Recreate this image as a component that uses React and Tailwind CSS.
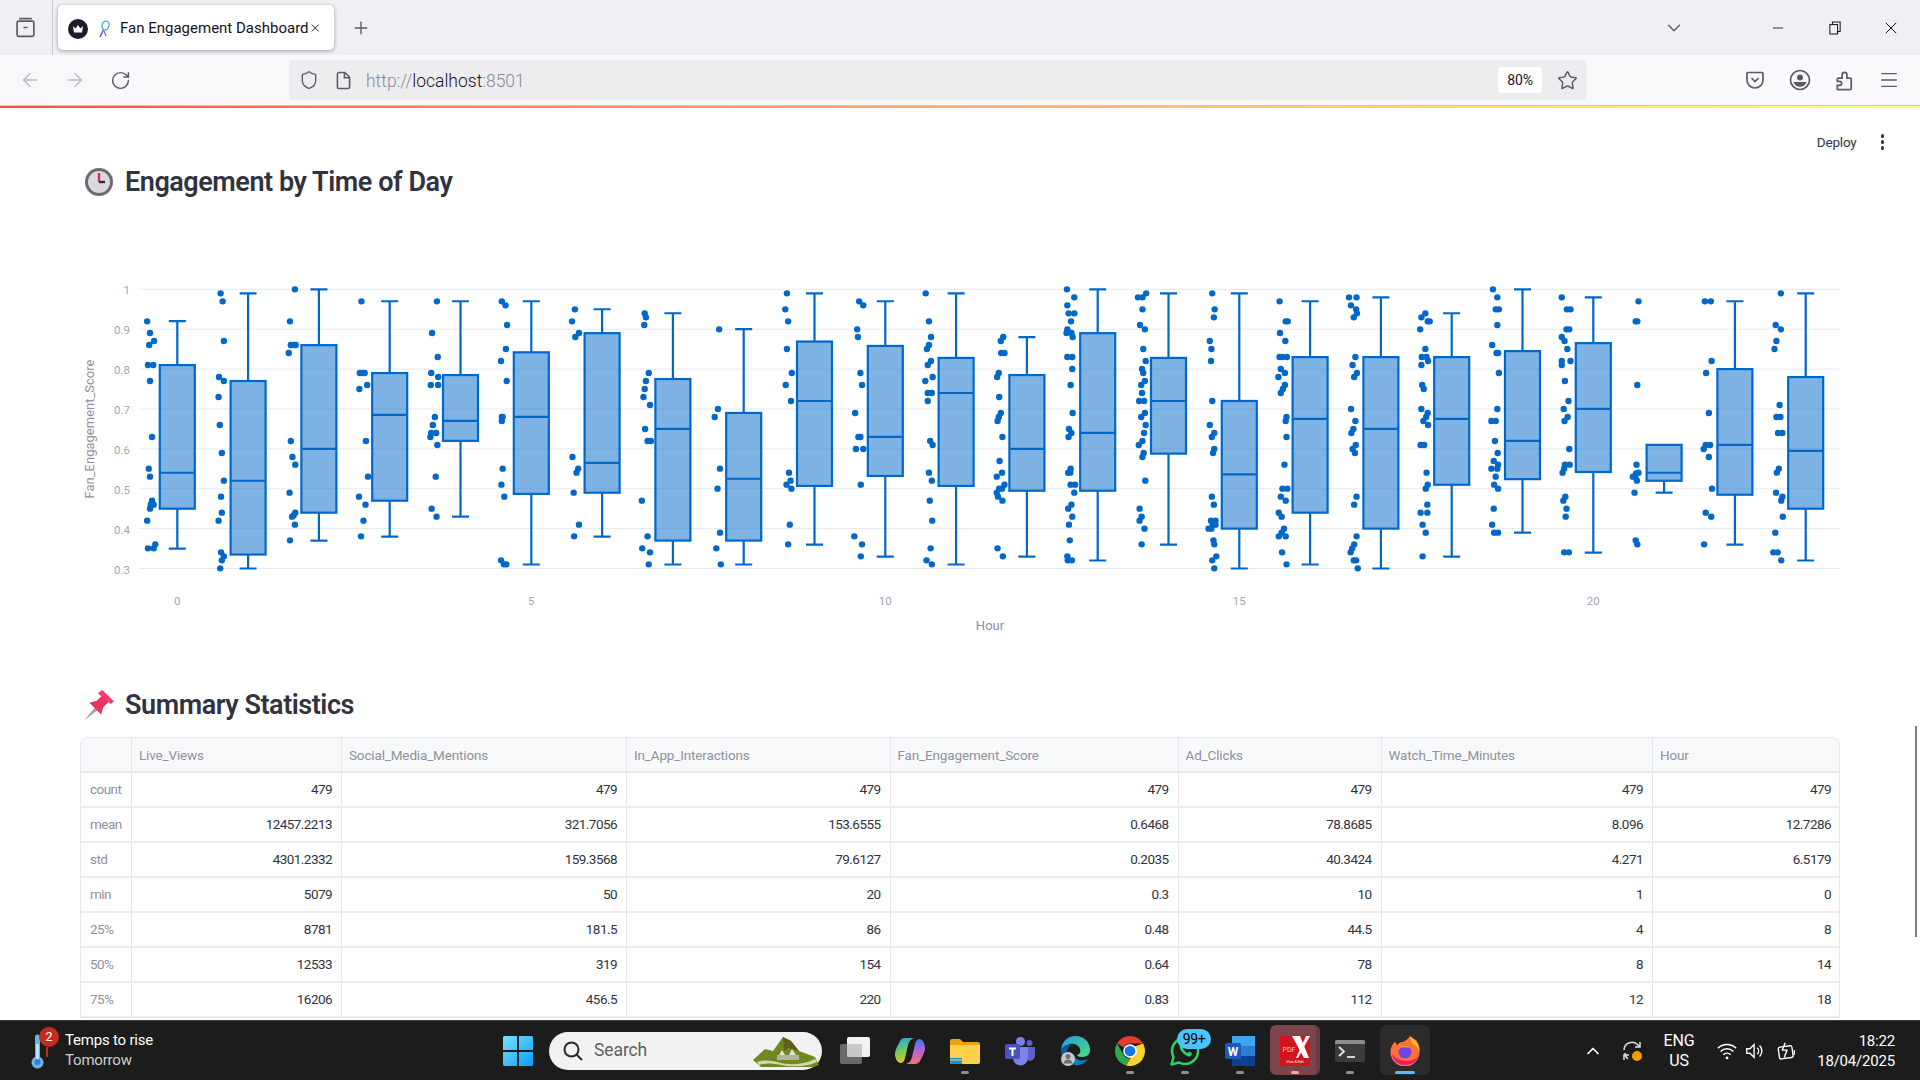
import { ArrowLeft, ArrowRight, ChevronDown, ChevronUp, Menu, Minus, Plus, RotateCw, Shield, Star, X } from "lucide-react";

const boxes = [
  [0.92, 0.81, 0.54, 0.45, 0.35], [0.99, 0.77, 0.52, 0.335, 0.3], [1, 0.86, 0.6, 0.44, 0.37], [0.97, 0.79, 0.685, 0.47, 0.38],
  [0.97, 0.785, 0.67, 0.62, 0.43], [0.97, 0.842, 0.68, 0.487, 0.31], [0.95, 0.89, 0.565, 0.49, 0.38], [0.94, 0.775, 0.65, 0.37, 0.31],
  [0.9, 0.69, 0.525, 0.37, 0.31], [0.99, 0.869, 0.72, 0.507, 0.36], [0.97, 0.858, 0.63, 0.532, 0.33], [0.99, 0.828, 0.74, 0.507, 0.31],
  [0.88, 0.785, 0.6, 0.495, 0.33], [1, 0.89, 0.64, 0.495, 0.32], [0.99, 0.828, 0.72, 0.588, 0.36], [0.99, 0.72, 0.536, 0.4, 0.3],
  [0.97, 0.83, 0.675, 0.44, 0.31], [0.98, 0.83, 0.65, 0.4, 0.3], [0.94, 0.83, 0.675, 0.51, 0.33], [1, 0.845, 0.62, 0.524, 0.39],
  [0.98, 0.865, 0.7, 0.542, 0.34], [0.61, 0.61, 0.54, 0.52, 0.49], [0.97, 0.8, 0.61, 0.485, 0.36], [0.99, 0.78, 0.595, 0.45, 0.32],
];

// scatter points, read off the crops: [x, y] in crop space, one list per crop
const pointGroups = [
  { x0: 70, sx: 2.45, pts: [[189,154],[196,189],[206,213],[194,225],[191,285],[204,285],[196,333],[201,501],[193,596],[196,620],[201,692],[200,700],[198,704],[205,704],[196,716],[189,752],[209,823],[205,835],[191,835],
    [369,70],[374,94],[377,213],[365,321],[377,333],[364,381],[367,465],[372,549],[377,632],[370,680],[372,728],[364,752],[370,847],[377,859],[372,871],[368,895],
    [551,58],[539,154],[541,225],[548,225],[553,225],[536,249],[541,513],[545,561],[552,584],[538,668],[552,728],[548,736],[544,740],[551,764],[539,811],
    [714,94],[710,309],[716,309],[722,309],[728,345],[709,357],[725,513],[730,620],[708,680],[724,704],[719,752],[713,799],
    [899,94],[887,189],[901,261],[885,309],[902,321],[884,345],[902,345],[894,441],[889,465],[885,489],[897,489],[883,501],[900,525],[896,620],[886,716],[898,740],
    [1058,94],[1067,106],[1071,165],[1068,237],[1056,273],[1070,333],[1058,441],[1060,441],[1058,453],[1060,596],[1057,644],[1064,680],[1056,871],[1063,883],[1069,883],
    [1237,118],[1230,154],[1247,189],[1238,201],[1231,561],[1245,596],[1241,608],[1234,668],[1247,764],[1235,799],
    [1408,130],[1411,142],[1407,165],[1418,309],[1411,333],[1408,357],[1405,381],[1421,405],[1409,477],[1415,513],[1423,513],[1401,692],[1415,799],[1402,835],[1421,847],[1418,883]] },
  { x0: 700, sx: 2.45, pts: [[47,178],[44,417],[36,441],[49,596],[43,656],[49,788],[40,835],[51,883],
    [213,70],[209,118],[216,154],[213,237],[225,309],[210,345],[223,393],[218,608],[222,632],[212,644],[224,656],[220,764],[216,823],
    [390,94],[400,106],[385,178],[387,201],[393,309],[397,345],[380,429],[388,501],[393,501],[382,537],[400,537],[394,644],[378,799],[397,823],[394,859],
    [553,70],[561,154],[566,201],[561,225],[556,237],[566,273],[558,285],[570,321],[552,333],[558,369],[568,369],[558,393],[564,513],[570,525],[561,608],[568,632],[563,692],[569,752],[565,835],[555,871],[568,883],
    [743,201],[737,213],[738,249],[746,249],[732,309],[728,321],[733,381],[737,429],[732,441],[729,453],[741,501],[734,573],[740,608],[727,620],[746,644],[740,656],[733,656],[727,668],[730,680],[741,692],[729,835],[742,859],
    [899,58],[917,82],[900,106],[903,130],[917,130],[909,154],[900,178],[910,189],[898,189],[913,201],[900,261],[912,261],[912,297],[908,345],[913,429],[904,477],[910,489],[903,501],[908,596],[902,608],[907,608],[908,644],[919,644],[917,668],[910,704],[902,716],[912,740],[904,764],[906,811],[900,859],[901,871],[911,871],
    [1093,70],[1073,82],[1084,82],[1084,118],[1078,165],[1090,178],[1086,237],[1092,273],[1083,297],[1086,309],[1090,333],[1081,345],[1083,369],[1076,393],[1088,393],[1090,429],[1081,441],[1092,465],[1088,489],[1084,513],[1075,525],[1087,549],[1084,561],[1091,632],[1077,716],[1082,740],[1077,752],[1089,776],[1082,823],
    [1255,70],[1261,118],[1259,142],[1249,213],[1253,237],[1252,273],[1255,393],[1249,465],[1260,489],[1254,501],[1260,537],[1257,549],[1254,680],[1259,704],[1252,752],[1263,752],[1256,764],[1263,764],[1246,776],[1253,776],[1258,811],[1260,823],[1265,859],[1255,871],[1260,895],
    [1420,94],[1435,154],[1440,154],[1421,189],[1434,213],[1420,261],[1427,261],[1438,261],[1423,297],[1433,309],[1417,321],[1433,345],[1428,357],[1423,369],[1437,441],[1435,453],[1437,501],[1432,584],[1427,656],[1439,656],[1423,680],[1435,692],[1418,728],[1425,740],[1431,776],[1425,788],[1418,799],[1435,799],[1426,847],[1437,883]] },
  { x0: 1300, sx: 2.529, pts: [[124,82],[143,82],[129,106],[142,118],[144,130],[136,142],[140,261],[133,285],[144,309],[137,321],[129,417],[140,453],[135,477],[130,489],[141,525],[133,537],[139,549],[143,680],[137,704],[143,799],[137,823],[132,835],[128,847],[136,871],[142,871],[146,895],
    [317,130],[307,142],[323,154],[328,154],[304,178],[317,237],[308,261],[320,261],[324,273],[307,285],[309,345],[313,357],[307,417],[323,429],[319,441],[312,453],[324,465],[305,525],[314,525],[320,608],[323,644],[318,656],[322,704],[305,728],[322,728],[310,764],[318,788],[310,859],
    [488,58],[499,82],[495,118],[503,118],[499,165],[486,225],[497,249],[501,249],[503,309],[499,417],[484,453],[495,453],[493,513],[500,549],[490,573],[501,584],[484,596],[499,596],[495,620],[491,644],[501,656],[490,716],[486,764],[491,788],[501,788],
    [662,82],[675,118],[684,118],[674,178],[681,178],[662,201],[669,213],[676,237],[662,273],[684,273],[662,285],[670,333],[679,393],[667,417],[677,441],[669,453],[681,537],[670,584],[682,584],[668,596],[664,608],[671,680],[666,692],[674,716],[672,740],[668,847],[680,847],
    [856,94],[849,154],[853,154],[853,345],[851,584],[856,608],[850,610],[842,620],[848,622],[852,632],[846,668],[849,811],[853,823],
    [1024,94],[1039,94],[1041,273],[1027,309],[1034,429],[1026,525],[1037,525],[1021,537],[1034,561],[1042,656],[1026,728],[1040,740],[1022,823],
    [1216,70],[1203,165],[1216,178],[1205,213],[1200,237],[1213,405],[1205,441],[1215,441],[1209,489],[1220,489],[1211,596],[1206,608],[1204,668],[1220,680],[1217,692],[1221,740],[1202,788],[1197,847],[1208,847],[1217,871]] },
];

const yOf = (v) => 568.5 - ((v - 0.3) / 0.7) * 279.2;
const xOf = (h) => 177.3 + 70.8 * h;

const columns = ["Live_Views", "Social_Media_Mentions", "In_App_Interactions", "Fan_Engagement_Score", "Ad_Clicks", "Watch_Time_Minutes", "Hour"];
const rows = [
  ["count", "479", "479", "479", "479", "479", "479", "479"],
  ["mean", "12457.2213", "321.7056", "153.6555", "0.6468", "78.8685", "8.096", "12.7286"],
  ["std", "4301.2332", "159.3568", "79.6127", "0.2035", "40.3424", "4.271", "6.5179"],
  ["min", "5079", "50", "20", "0.3", "10", "1", "0"],
  ["25%", "8781", "181.5", "86", "0.48", "44.5", "4", "8"],
  ["50%", "12533", "319", "154", "0.64", "78", "8", "14"],
  ["75%", "16206", "456.5", "220", "0.83", "112", "12", "18"],
];

function BoxChart() {
  return (
    <svg viewBox="80 270 1780 380" className="block w-[1780px] h-[380px] ml-[80px] mt-[68px] shrink-0" fontFamily="Roboto, sans-serif">
      {[0.3, 0.4, 0.5, 0.6, 0.7, 0.8, 0.9, 1].map((v) => (
        <g key={v}>
          <line x1="139" x2="1840" y1={yOf(v)} y2={yOf(v)} stroke="#e6eaf1" strokeWidth="1" />
          <text x="130" y={yOf(v) + 5} textAnchor="end" fontSize="11.5" fill="#a3a5ae">{v}</text>
        </g>
      ))}
      {[0, 5, 10, 15, 20].map((h) => (
        <text key={h} x={xOf(h)} y="605" textAnchor="middle" fontSize="11.5" fill="#a3a5ae">{h}</text>
      ))}
      <text x="990" y="630" textAnchor="middle" fontSize="13" fill="#8f919c">Hour</text>
      <text x="94" y="429" textAnchor="middle" fontSize="13" fill="#8f919c" transform="rotate(-90 94 429)">Fan_Engagement_Score</text>
      {boxes.map(([hi, q3, med, q1, lo], h) => {
        const x = xOf(h);
        return (
          <g key={h} stroke="#0068c9" strokeWidth="2.2" fill="none">
            {hi !== q3 && <path d={`M${x} ${yOf(hi)}V${yOf(q3)}M${x - 8.5} ${yOf(hi)}h17`} />}
            <path d={`M${x} ${yOf(q1)}V${yOf(lo)}M${x - 8.5} ${yOf(lo)}h17`} />
            <rect x={x - 17.5} y={yOf(q3)} width="35" height={yOf(q1) - yOf(q3)} fill="#0068c9" fillOpacity="0.5" />
            <line x1={x - 17.5} x2={x + 17.5} y1={yOf(med)} y2={yOf(med)} />
          </g>
        );
      })}
      {pointGroups.map((g) =>
        g.pts.map(([zx, zy], i) => <circle key={`${g.x0}-${i}`} cx={g.x0 + zx / g.sx} cy={270 + zy / 3} r="3.2" fill="#0068c9" />)
      )}
    </svg>
  );
}

function StatsTable() {
  const grid = "grid grid-cols-[51px_210px_285px_263.5px_288px_203px_271.5px_188px]";
  return (
    <div className="ml-[80px] mt-[12px] w-[1760px] border-x border-t border-[#e6e7ea] rounded-t-lg overflow-hidden text-[13.5px] font-[Roboto] shrink-0">
      <div className={`${grid} h-[35px] bg-[#f8f9fb] border-b-2 border-[#e9eaed] text-[#8f919c] tracking-[-0.15px]`}>
        <div className="border-r border-[#e6e7ea]" />
        {columns.map((c) => (
          <div key={c} className="flex items-center pl-[7px] pt-[2px] border-r border-[#e6e7ea] last:border-r-0">{c}</div>
        ))}
      </div>
      {rows.map((row) => (
        <div key={row[0]} className={`${grid} h-[35px] border-b-2 border-[#eceded] tracking-[-0.55px]`}>
          <div className="flex items-center pl-[9px] border-r border-[#e6e7ea] text-[#8f919c]">{row[0]}</div>
          {row.slice(1).map((v, i) => (
            <div key={i} className="flex items-center justify-end pr-[9px] last:pr-[10px] border-r border-[#e6e7ea] last:border-r-0 text-[#31333f]">{v}</div>
          ))}
        </div>
      ))}
    </div>
  );
}

function ClockEmoji() {
  return (
    <svg viewBox="0 0 30 30" className="w-[30px] h-[30px]">
      <circle cx="15" cy="15" r="14" fill="#6d6a70" />
      <circle cx="15" cy="15" r="11" fill="#dcd8de" />
      <path d="M15 6v9" stroke="#e0245e" strokeWidth="2.4" />
      <path d="M15 15h6" stroke="#2c2c4a" strokeWidth="2.4" />
    </svg>
  );
}

function PinEmoji() {
  return (
    <svg viewBox="0 0 30 30" className="w-[32px] h-[32px]">
      <path d="M1 29.500l10-12 2.500 2.500z" fill="#a5a2a8" />
      <path d="M6 13l11 11 2-7 5-5-6-6-5 5z" fill="#e8325f" />
      <path d="M18 1l11 10.500-3 2.500L14 4z" fill="#f23d6d" />
    </svg>
  );
}

function FirefoxIcon() {
  return (
    <svg viewBox="0 0 30 30" className="w-[30px] h-[30px]">
      <path d="M26 4c3 4 4 8 3.500 12a14.500 14.500 0 0 1-29 0C.5 11 3 8 5 5.500L7 9c2-2.500 4.500-3 6-3 3-1.500 5-3 7-6 0 3 4 2 6 4z" fill="#ff7139" />
      <path d="M20 0c4 3 9 7 9.500 15-2-4-4-6-7-7-1-3-2-5-2.500-8z" fill="#ffbd2e" />
      <path d="M2 18c1 6 6 11 13 11 7 0 12-4 14-10-3 4-7 6-13 6-6 0-11-3-14-7z" fill="#f5156c" />
      <circle cx="15" cy="16" r="6.500" fill="#7542e5" />
      <path d="M9 12c3-3 8-3 11 0-3-1-8-1-11 0z" fill="#ffa436" />
    </svg>
  );
}

function ChromeIcon() {
  return (
    <svg viewBox="0 0 48 48" className="w-[30px] h-[30px]">
      <path d="M24 0a24 24 0 0 1 20.800 12H24a12 12 0 0 0-10.400 6L3.200 12A24 24 0 0 1 24 0z" fill="#e33b2e" />
      <path d="M3.200 12l10.400 18a12 12 0 0 0 10.400 6L17.800 47.200A24 24 0 0 1 3.200 12z" fill="#2da94f" />
      <path d="M44.800 12a24 24 0 0 1-27 35.200L28.200 30a12 12 0 0 0 0-12z" fill="#fdd12d" />
      <circle cx="24" cy="24" r="11" fill="#fff" />
      <circle cx="24" cy="24" r="8.500" fill="#1a73e8" />
    </svg>
  );
}

function EdgeIcon() {
  return (
    <svg viewBox="0 0 30 30" className="w-[30px] h-[30px]">
      <defs>
        <linearGradient id="edgeA" x1="0" y1="0" x2="1" y2="1">
          <stop offset="0" stopColor="#1d9fe0" />
          <stop offset="1" stopColor="#4fdc7a" />
        </linearGradient>
      </defs>
      <path d="M1 14C2 5 8 0 15 0c9 0 15 6 15 14 0 5-4 7-8 7-3 0-5-1-5-2 3-1 4-3 3-6-1-4-6-6-10-5-4 1-8 3-9 6z" fill="url(#edgeA)" />
      <path d="M1 14c2-4 6-6 10-5-3 2-5 5-4 10 1 4 4 8 8 10C7 29 1 23 1 14z" fill="#0c59a4" />
      <path d="M15 29c5 1 10-2 13-6-3 1-6 2-9 1-3-1-5-3-5-6-2 3-1 9 1 11z" fill="#1379c9" />
      <circle cx="8" cy="23" r="7" fill="#c8c8c8" />
      <circle cx="8" cy="20.500" r="2.500" fill="#6e6e6e" />
      <path d="M3.500 27.500a4.500 4 0 0 1 9 0z" fill="#6e6e6e" />
    </svg>
  );
}

function TeamsIcon() {
  return (
    <svg viewBox="0 0 30 30" className="w-[30px] h-[30px]">
      <circle cx="24.500" cy="7" r="3" fill="#5b5fc7" />
      <circle cx="15.500" cy="5.500" r="4.500" fill="#7b83eb" />
      <path d="M20 11h10v9a5 5 0 0 1-7 4.500z" fill="#5b5fc7" />
      <path d="M8 11h15v11a7.500 7.500 0 0 1-15 0z" fill="#7b83eb" />
      <rect x="0" y="8" width="15" height="15" rx="2" fill="#4b53bc" />
      <path d="M4 11.500h7v2H8.500V20h-2v-6.500H4z" fill="#fff" />
    </svg>
  );
}

function WordIcon() {
  return (
    <svg viewBox="0 0 30 30" className="w-[30px] h-[30px]">
      <rect x="7" y="0" width="23" height="10" fill="#41a5ee" />
      <rect x="7" y="10" width="23" height="10" fill="#2b7cd3" />
      <rect x="7" y="20" width="23" height="10" fill="#103f91" />
      <rect x="0" y="7" width="16" height="16" rx="1.500" fill="#185abd" />
      <text x="8" y="19.500" textAnchor="middle" fontSize="12" fontWeight="700" fill="#fff" fontFamily="Roboto, sans-serif">W</text>
    </svg>
  );
}

function WhatsAppIcon() {
  return (
    <svg viewBox="0 0 30 30" className="w-[30px] h-[30px]" fill="none">
      <path d="M1.500 28.500l2-7.500A13 13 0 1 1 9 26.500z" stroke="#25d366" strokeWidth="2.500" strokeLinejoin="round" />
      <path d="M10 9c-1 2 0 5 3 8s6 4 8 3l1-3-3-1.500-1.500 1.500c-2-1-3.500-2.500-4.500-4.500L14 11l-1.500-3z" fill="#25d366" />
    </svg>
  );
}

function PdfIcon() {
  return (
    <svg viewBox="0 0 30 30" className="w-[30px] h-[30px]">
      <rect width="30" height="30" fill="#d2141c" />
      <path d="M12 0h8l9 22h-5z" fill="#fff" />
      <path d="M30 0L18 22h-2L26 0z" fill="#fff" />
      <text x="2.500" y="16" fontSize="7" fill="#f3c7c7" fontFamily="Roboto, sans-serif">PDF</text>
      <text x="15" y="27" fontSize="3.500" textAnchor="middle" fill="#fff" fontFamily="Roboto, sans-serif">View &amp; Edit</text>
    </svg>
  );
}

function TerminalIcon() {
  return (
    <svg viewBox="0 0 30 24" className="w-[30px] h-[24px]">
      <rect width="30" height="22" y="1" rx="1.500" fill="#3b3b3b" />
      <path d="M1.500 1H28.500A1.500 1.500 0 0 1 30 2.500V5H0V2.500A1.500 1.500 0 0 1 1.500 1z" fill="#8c8c8c" />
      <path d="M4 8l5 4.500-5 4.500" stroke="#e6e6e6" strokeWidth="1.800" fill="none" />
      <path d="M12 18h8" stroke="#e6e6e6" strokeWidth="1.800" />
    </svg>
  );
}

function FolderIcon() {
  return (
    <svg viewBox="0 0 30 30" className="w-[30px] h-[30px]">
      <path d="M0 5a2 2 0 0 1 2-2h8l3 3h15a2 2 0 0 1 2 2v2H0z" fill="#e8a412" />
      <path d="M0 9h30v17a2 2 0 0 1-2 2H2a2 2 0 0 1-2-2z" fill="#fdd04a" />
      <path d="M0 22h12v1.500H0zM0 24.500h12V28H2a2 2 0 0 1-2-2z" fill="#1f8fd8" />
    </svg>
  );
}

function CopilotIcon() {
  return (
    <svg viewBox="0 0 30 30" className="w-[30px] h-[30px]">
      <defs>
        <linearGradient id="copA" x1="0.3" y1="0" x2="0.6" y2="1">
          <stop offset="0" stopColor="#1ea7e8" />
          <stop offset="0.55" stopColor="#7fd04a" />
          <stop offset="1" stopColor="#f6c02a" />
        </linearGradient>
        <linearGradient id="copB" x1="0.5" y1="0" x2="0.5" y2="1">
          <stop offset="0" stopColor="#3a7bea" />
          <stop offset="0.45" stopColor="#b45fdc" />
          <stop offset="1" stopColor="#f4736b" />
        </linearGradient>
      </defs>
      <path d="M10 2h9c-3 1-5 3-6 7l-3 13c-.5 3-2 5-5 5-3-1-5-5-5-9 0-3 1-5 2-7l3-6c1-2 3-3 5-3z" fill="url(#copA)" />
      <path d="M20 28h-9c3-1 5-3 6-7l3-13c.5-3 2-5 5-5 3 1 5 5 5 9 0 3-1 5-2 7l-3 6c-1 2-3 3-5 3z" fill="url(#copB)" />
    </svg>
  );
}

function TaskViewIcon() {
  return (
    <svg viewBox="0 0 30 30" className="w-[30px] h-[30px]">
      <rect x="0" y="8" width="22" height="20" rx="2" fill="#6a6a6a" />
      <rect x="7" y="1" width="23" height="20" rx="2" fill="#f2f2f2" />
      <path d="M7 8h15v13H9a2 2 0 0 1-2-2z" fill="#c9c9c9" />
    </svg>
  );
}

function StartIcon() {
  return (
    <svg viewBox="0 0 30 30" className="w-[30px] h-[30px]">
      <defs>
        <linearGradient id="winA" x1="0" y1="0" x2="1" y2="1">
          <stop offset="0" stopColor="#76e4fd" />
          <stop offset="1" stopColor="#0b9bf5" />
        </linearGradient>
      </defs>
      <path d="M1.500 0H14v14H0V1.500A1.500 1.500 0 0 1 1.500 0zM16 0h12.500A1.500 1.500 0 0 1 30 1.500V14H16zM0 16h14v14H1.500A1.500 1.500 0 0 1 0 28.500zM16 16h14v12.500a1.500 1.500 0 0 1-1.500 1.500H16z" fill="url(#winA)" />
    </svg>
  );
}

function MountainArt() {
  return (
    <svg viewBox="0 0 66 32" className="w-[66px] h-[32px] shrink-0">
      <path d="M0 25L12 14 20 16 30 2 38 6 46 16 62 22 66 30 60 32H8z" fill="#6e8a1f" />
      <path d="M30 2l8 4 8 10-10-3-5 3z" fill="#5d5d1c" />
      <path d="M4 27c8-3 16-1 24 1s22 2 34-4l2 3c-10 5-26 5-36 3s-16-2-22 0z" fill="#d8d3b6" />
      <path d="M26 20l3-5 3 5zM36 20l3-6 4 6z" fill="#e3e0d3" />
      <path d="M24 20h22v5H24z" fill="#b8b39c" />
    </svg>
  );
}

function TaskSlot({ dot, children }) {
  return (
    <div className="relative w-[55px] h-full flex items-center justify-center shrink-0">
      {children}
      {dot && <span className={`absolute bottom-[6px] left-1/2 -translate-x-1/2 h-[3px] rounded-full ${dot}`} />}
    </div>
  );
}

function Taskbar() {
  return (
    <div className="h-[60px] shrink-0 bg-[#1c1c1c] border-t border-[#3a3a3a] flex items-center font-[Roboto] text-white">
      <div className="w-[490px] shrink-0 flex items-center">
        <div className="relative w-[65px] h-[59px] shrink-0">
          <svg viewBox="0 0 14 36" className="absolute left-[30px] top-[13px] w-[14px] h-[36px]">
            <path d="M5 3a2.500 2.500 0 0 1 5 0v20a6 6 0 1 1-5 0z" fill="#6fb3e8" />
            <path d="M6.500 10h2v16h-2z" fill="#e8eef5" />
            <circle cx="7.500" cy="28" r="3" fill="#2d7fd0" />
          </svg>
          <div className="absolute left-[39px] top-[6px] w-[20px] h-[20px] rounded-full bg-[#c42b1c] flex items-center justify-center text-[13px]">2</div>
          <div className="absolute left-[46px] top-[26px] w-[2px] h-[10px] bg-[#c42b1c]" />
        </div>
        <div className="flex flex-col text-[15px] leading-[20px] tracking-[-0.2px] -translate-y-px">
          <span className="text-white">Temps to rise</span>
          <span className="text-[#cfcfcf]">Tomorrow</span>
        </div>
      </div>
      <TaskSlot><StartIcon /></TaskSlot>
      <div className="ml-[4px] mr-[5px] w-[273px] h-[38px] rounded-full bg-[#f2f2f2] flex items-center pl-[14px] pr-[3px] shrink-0">
        <svg viewBox="0 0 20 20" className="w-[20px] h-[20px]" fill="none" stroke="#2b2b2b" strokeWidth="2">
          <circle cx="8.500" cy="8.500" r="7" />
          <path d="M13.500 13.500L19 19" />
        </svg>
        <span className="ml-[11px] text-[17.5px] text-[#5f5f5f] tracking-[-0.1px]">Search</span>
        <div className="ml-auto"><MountainArt /></div>
      </div>
      <TaskSlot><TaskViewIcon /></TaskSlot>
      <TaskSlot><CopilotIcon /></TaskSlot>
      <TaskSlot dot="w-[8px] bg-[#8f8f8f]"><FolderIcon /></TaskSlot>
      <TaskSlot><TeamsIcon /></TaskSlot>
      <TaskSlot><EdgeIcon /></TaskSlot>
      <TaskSlot dot="w-[8px] bg-[#8f8f8f]"><ChromeIcon /></TaskSlot>
      <TaskSlot dot="w-[8px] bg-[#8f8f8f]">
        <WhatsAppIcon />
        <span className="absolute left-[20px] top-[8px] w-[34px] h-[20px] rounded-full bg-[#4cc2ff] text-black text-[14px] flex items-center justify-center tracking-[-0.4px]">99+</span>
      </TaskSlot>
      <TaskSlot dot="w-[8px] bg-[#8f8f8f]"><WordIcon /></TaskSlot>
      <TaskSlot dot="w-[8px] bg-[#f0a8b0]">
        <span className="absolute left-[2.5px] top-[4px] w-[50px] h-[50px] rounded-md bg-[#7d444a] border-r-4 border-[#6a3a40]" />
        <span className="relative"><PdfIcon /></span>
      </TaskSlot>
      <TaskSlot dot="w-[8px] bg-[#8f8f8f]"><TerminalIcon /></TaskSlot>
      <TaskSlot dot="w-[20px] bg-[#4cc2ff]">
        <span className="absolute left-[2.5px] top-[4px] w-[50px] h-[50px] rounded-md bg-[#2b2b2b]" />
        <span className="relative"><FirefoxIcon /></span>
      </TaskSlot>
      <div className="ml-[151px] flex items-center shrink-0">
        <ChevronUp size={20} strokeWidth={2} className="text-white" />
        <svg viewBox="0 0 24 24" className="ml-[17px] w-[24px] h-[24px]" fill="none" stroke="#e0e0e0" strokeWidth="1.500">
          <path d="M4 11a8 8 0 0 1 14-5l2 2M20 3v5h-5M5 14a8 8 0 0 0 3 6M4 21v-5h5" />
          <circle cx="17" cy="17" r="5" fill="#f59b00" stroke="none" />
        </svg>
        <div className="ml-[12px] w-[46px] flex flex-col items-center text-[16px] leading-[20px] tracking-[-0.2px]">
          <span>ENG</span>
          <span>US</span>
        </div>
        <svg viewBox="0 0 24 24" className="ml-[14px] w-[22px] h-[22px]" fill="none" stroke="#fff" strokeWidth="1.600">
          <path d="M2 9a14 14 0 0 1 20 0M5 12.500a10 10 0 0 1 14 0M8 16a6 6 0 0 1 8 0" />
          <circle cx="12" cy="19.500" r="1.500" fill="#fff" stroke="none" />
        </svg>
        <svg viewBox="0 0 24 24" className="ml-[6px] w-[22px] h-[22px]" fill="none" stroke="#fff" strokeWidth="1.500">
          <path d="M3 9.500h3.500L11 5v14l-4.500-4.500H3z" />
          <path d="M14.500 8.500a5 5 0 0 1 0 7M17 6a8.500 8.500 0 0 1 0 12" />
        </svg>
        <svg viewBox="0 0 24 24" className="ml-[10px] w-[22px] h-[22px]" fill="none" stroke="#fff" strokeWidth="1.500">
          <rect x="3" y="7" width="15" height="13" rx="2" transform="rotate(-8 10 13)" />
          <path d="M20 11v5M10 3l-3 8h5l-3 8" />
        </svg>
        <div className="ml-[15px] w-[82px] flex flex-col items-end text-[15px] leading-[20px] tracking-[-0.2px]">
          <span>18:22</span>
          <span>18/04/2025</span>
        </div>
      </div>
    </div>
  );
}

function TitleBar() {
  return (
    <div className="h-[55px] bg-[#f0f0f4] flex items-center shrink-0 text-[#5b5b66]">
      <div className="w-[53px] h-full flex items-center justify-center border-r border-[#c9c9ce] shrink-0 pr-[2px]">
        <svg viewBox="0 0 20 20" className="w-[21px] h-[21px]" fill="none" stroke="#5b5b66" strokeWidth="1.600">
          <path d="M4 1.500h12M2 5.500a1.500 1.500 0 0 1 1.500-1.500h13A1.500 1.500 0 0 1 18 5.500V17a1.500 1.500 0 0 1-1.500 1.500h-13A1.500 1.500 0 0 1 2 17zM8 10h4" />
        </svg>
      </div>
      <div className="ml-[5px] w-[276px] h-[45px] bg-white rounded-[5px] shadow-[0_1px_4px_rgba(0,0,0,0.35)] flex items-center pl-[10px] pt-[2px] shrink-0">
        <div className="w-[20px] h-[20px] rounded-full bg-[#1c1c2a] flex items-center justify-center shrink-0">
          <svg viewBox="0 0 14 14" className="w-[14px] h-[14px]"><path d="M2 4l2.500 2.500L7 3l2.500 3.500L12 4l-1 6.500H3z" fill="#fff" /></svg>
        </div>
        <svg viewBox="0 0 12 18" className="ml-[10px] w-[12px] h-[18px] shrink-0" fill="none">
          <ellipse cx="7.500" cy="5.500" rx="3.500" ry="4.500" stroke="#5aa0e6" strokeWidth="1.300" transform="rotate(15 7.500 5.500)" />
          <path d="M5.500 10L2 17" stroke="#3b6fd0" strokeWidth="1.500" />
          <path d="M6 11l2 5" stroke="#d0507a" strokeWidth="1.200" />
        </svg>
        <span className="ml-[10px] text-[15px] text-[#15141a] whitespace-nowrap font-[Roboto]">Fan Engagement Dashboard</span>
        <X size={16} strokeWidth={1.8} className="ml-auto mr-[13px] text-[#15141a] -translate-y-px" />
      </div>
      <Plus size={20} strokeWidth={1.6} className="ml-[17px] shrink-0" />
      <ChevronDown size={22} strokeWidth={1.5} className="ml-auto mr-[85px] shrink-0" />
      <Minus size={16} strokeWidth={1.3} className="mr-[43px] text-[#15141a] shrink-0" />
      <svg viewBox="0 0 14 16" className="mr-[40px] w-[12px] h-[14px] shrink-0" fill="none" stroke="#15141a" strokeWidth="1.200">
        <rect x="1" y="4" width="9" height="11" />
        <path d="M4 4V1h9v11h-3" />
      </svg>
      <X size={20} strokeWidth={1.2} className="mr-[19px] text-[#15141a] shrink-0" />
    </div>
  );
}

function NavBar() {
  return (
    <div className="h-[50px] bg-[#f9f9fb] flex items-center shrink-0 text-[#5b5b66]">
      <ArrowLeft size={22} strokeWidth={1.5} className="ml-[19px] text-[#b9b9be] shrink-0" />
      <ArrowRight size={22} strokeWidth={1.5} className="ml-[23px] text-[#b9b9be] shrink-0" />
      <RotateCw size={21} strokeWidth={1.7} className="ml-[24px] shrink-0" />
      <div className="ml-[158px] w-[1298px] h-[40px] rounded bg-[#ededf0] flex items-center pl-[10px] shrink-0">
        <Shield size={20} strokeWidth={1.6} className="shrink-0" />
        <svg viewBox="0 0 16 20" className="ml-[17px] w-[15px] h-[19px] shrink-0" fill="none" stroke="#5b5b66" strokeWidth="1.700">
          <path d="M3 1.500h6.500L14.500 6.500V17A1.500 1.500 0 0 1 13 18.500H3A1.500 1.500 0 0 1 1.500 17V3A1.500 1.500 0 0 1 3 1.500z" />
          <path d="M9 1.500v5.500h5.500" />
        </svg>
        <span className="ml-[15px] pt-[3px] text-[17.5px] font-[Roboto] font-light text-[#8a8a92] whitespace-nowrap">
          http://<span className="text-[#15141a]">localhost</span>:8501
        </span>
        <span className="ml-auto mr-[15px] w-[44px] h-[26px] bg-white rounded flex items-center justify-center text-[14px] text-[#15141a] font-[Roboto] tracking-[-0.2px]">80%</span>
        <Star size={21} strokeWidth={1.7} className="mr-[9px] shrink-0" />
      </div>
      <svg viewBox="0 0 20 20" className="ml-[158px] w-[20px] h-[20px] shrink-0" fill="none" stroke="#5b5b66" strokeWidth="1.700">
        <path d="M3 2.500h14a1 1 0 0 1 1 1V10a8 8 0 0 1-16 0V3.500a1 1 0 0 1 1-1z" />
        <path d="M6.500 8l3.500 3.500L13.500 8" />
      </svg>
      <svg viewBox="0 0 22 22" className="ml-[24px] w-[22px] h-[22px] shrink-0" fill="none">
        <circle cx="11" cy="11" r="9.500" stroke="#5b5b66" strokeWidth="1.700" />
        <circle cx="11" cy="8.500" r="3" fill="#5b5b66" />
        <path d="M4.500 13h13a6.800 6.800 0 0 1-13 0z" fill="#5b5b66" />
      </svg>
      <svg viewBox="0 0 24 24" className="ml-[22px] w-[23px] h-[23px] shrink-0" fill="none" stroke="#5b5b66" strokeWidth="1.800">
        <path d="M5 21.500h13a1 1 0 0 0 1-1v-10a1 1 0 0 0-1-1h-3.500V6a2.500 2.500 0 0 0-5 0v3.500H5.500a1 1 0 0 0-1 1V13H7a2 2 0 0 1 0 4H4.500v4a.5.5 0 0 0 .5.5z" />
      </svg>
      <Menu size={22} strokeWidth={1.5} className="ml-[22px] shrink-0" />
    </div>
  );
}

export default function App() {
  return (
    <div className="relative w-[1920px] h-[1080px] overflow-hidden flex flex-col bg-white">
      <TitleBar />
      <NavBar />
      <div className="h-[1px] bg-[#c9c9ce] shrink-0" />
      <div className="h-[2px] shrink-0 bg-gradient-to-r from-[#ff4b4b] to-[#ffff8c]" />
      <main className="relative h-[912px] overflow-hidden flex flex-col">
        <div className="absolute top-[24px] right-[36px] flex items-center font-[Roboto] text-[13.5px] tracking-[-0.2px] text-[#31333f]">
          <span>Deploy</span>
          <span className="ml-[24px] flex flex-col gap-[2.5px]">
            <i className="w-[3.5px] h-[3.5px] rounded-full bg-[#31333f]" />
            <i className="w-[3.5px] h-[3.5px] rounded-full bg-[#31333f]" />
            <i className="w-[3.5px] h-[3.5px] rounded-full bg-[#31333f]" />
          </span>
        </div>
        <h2 className="ml-[84px] mt-[54px] h-[40px] flex items-center shrink-0">
          <ClockEmoji />
          <span className="ml-[11px] font-[Roboto] font-semibold text-[27px] tracking-[-0.45px] text-[#31333f]">Engagement by Time of Day</span>
        </h2>
        <BoxChart />
        <h2 className="ml-[83px] mt-[35px] h-[40px] flex items-center shrink-0">
          <PinEmoji />
          <span className="ml-[10px] font-[Roboto] font-semibold text-[27px] tracking-[-0.45px] text-[#31333f]">Summary Statistics</span>
        </h2>
        <StatsTable />
        <div className="absolute right-[3px] top-[618px] w-[2px] h-[211px] bg-[#7e7e7e]" />
      </main>
      <Taskbar />
    </div>
  );
}
